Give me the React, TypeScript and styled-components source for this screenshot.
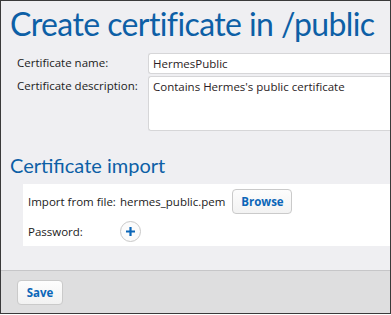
import React from "react";
import styled, { createGlobalStyle } from "styled-components";

const GlobalStyle = createGlobalStyle`
  html, body {
    margin: 0;
    padding: 0;
    background: #ffffff;
  }
  body {
    font-family: "Open Sans", "Noto Sans", sans-serif;
  }
`;

const Frame = styled.div`
  width: 389px;
  height: 312px;
  border: 1px solid #3a3a3a;
  background: #efeff2;
  display: flex;
  flex-direction: column;
  overflow: hidden;
`;

const Body = styled.div`
  flex: 1;
  padding: 0 0 0 9px;
`;

const Title = styled.h1`
  margin: 0;
  padding-top: 1px;
  font-family: Lato, "Open Sans", sans-serif;
  font-size: 32px;
  letter-spacing: -0.6px;
  font-weight: 400;
  line-height: 44px;
  color: #0d5fa6;
  white-space: nowrap;
`;

const FieldGrid = styled.div`
  display: grid;
  grid-template-columns: 131px 1fr;
  row-gap: 2px;
  margin-top: 7px;
  padding-left: 7px;
`;

const Label = styled.label`
  font-size: 11.5px;
  color: #1b1b1b;
  line-height: 20px;
  white-space: nowrap;
`;

const TextBox = styled.div<{ $tall?: boolean }>`
  height: ${(p) => (p.$tall ? "51px" : "17px")};
  background: #ffffff;
  border: 1px solid #d6d6d8;
  border-right: none;
  border-radius: 3px 0 0 3px;
  padding: 1px 4px;
  font-size: 11.5px;
  line-height: 18px;
  color: #2a1c24;
  white-space: nowrap;
  overflow: hidden;
`;

const SectionTitle = styled.h2`
  margin: 20px 0 0 0;
  font-family: Lato, "Open Sans", sans-serif;
  font-size: 20px;
  font-weight: 400;
  line-height: 28px;
  color: #0d5fa6;
`;

const Panel = styled.div`
  margin: 5px 0 0 13px;
  background: #ffffff;
  padding: 5px 0 4px 5px;
  display: grid;
  grid-template-columns: 92px auto;
  row-gap: 7px;
  align-items: center;
`;

const PanelLabel = styled.span`
  font-size: 11.5px;
  color: #1b1b1b;
  white-space: nowrap;
`;

const FileRow = styled.div`
  display: flex;
  align-items: center;
  gap: 7px;
  font-size: 11.5px;
  color: #1b1b1b;
`;

const Button = styled.button<{ $w: number }>`
  width: ${(p) => p.$w}px;
  height: 25px;
  border: 1px solid #cacaca;
  border-radius: 4px;
  background: linear-gradient(#fdfdfd, #f2f2f2);
  color: #0b66b8;
  font-family: "Open Sans", "Noto Sans", sans-serif;
  font-size: 11.5px;
  font-weight: 700;
  padding: 0;
  cursor: pointer;
`;

const RoundButton = styled.button`
  width: 21px;
  height: 21px;
  border-radius: 50%;
  border: 1px solid #c8c8c8;
  background: #fbfbfb;
  display: flex;
  align-items: center;
  justify-content: center;
  padding: 0;
`;

const Footer = styled.div`
  height: 42px;
  border-top: 1px solid #c6c6c8;
  background: #dededf;
  display: flex;
  align-items: center;
  padding-left: 16px;
`;

export default function App() {
  return (
    <>
      <GlobalStyle />
      <Frame>
        <Body>
          <Title>Create certificate in /public</Title>
          <FieldGrid>
            <Label>Certificate name:</Label>
            <TextBox>HermesPublic</TextBox>
            <Label>Certificate description:</Label>
            <TextBox $tall>Contains Hermes's public certificate</TextBox>
          </FieldGrid>
          <SectionTitle>Certificate import</SectionTitle>
          <Panel>
            <PanelLabel>Import from file:</PanelLabel>
            <FileRow>
              hermes_public.pem
              <Button $w={60}>Browse</Button>
            </FileRow>
            <PanelLabel>Password:</PanelLabel>
            <div>
              <RoundButton>
                <svg width="11" height="11" viewBox="0 0 11 11">
                  <path d="M5.5 1v9M1 5.5h9" stroke="#0b66b8" strokeWidth="2.2" />
                </svg>
              </RoundButton>
            </div>
          </Panel>
        </Body>
        <Footer>
          <Button $w={46}>Save</Button>
        </Footer>
      </Frame>
    </>
  );
}
